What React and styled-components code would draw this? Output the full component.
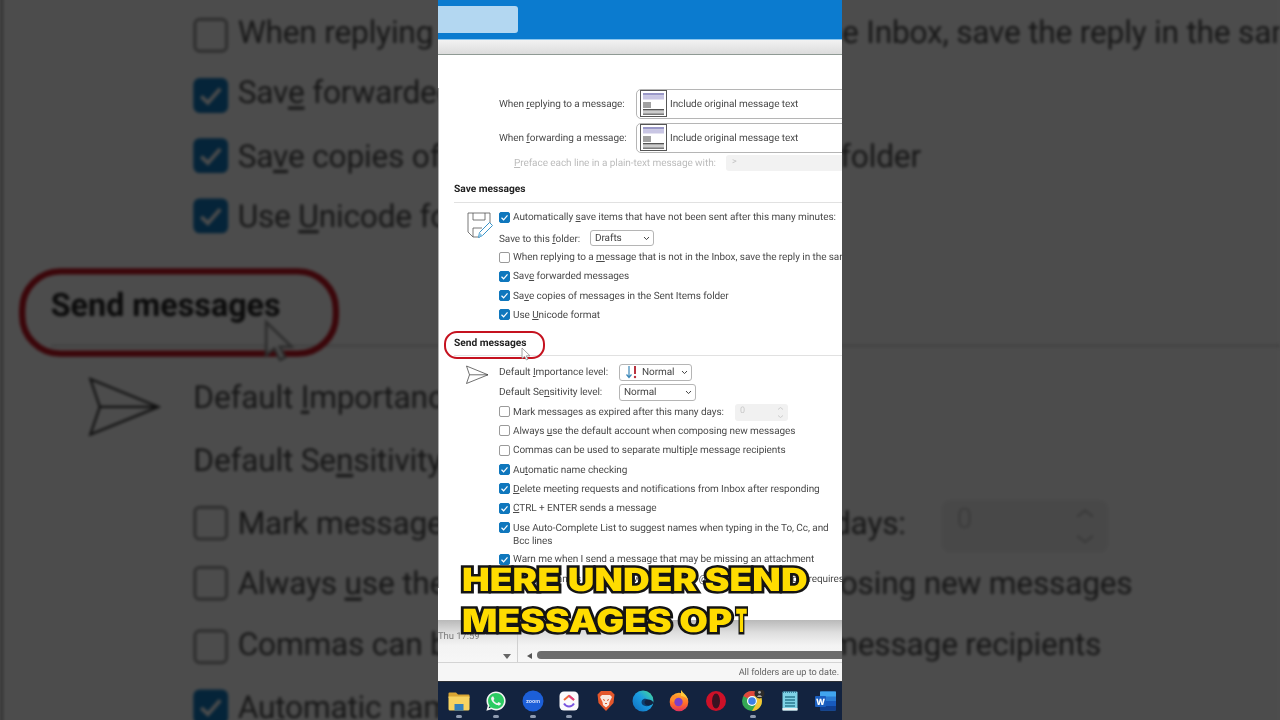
import React from "react";
import styled, { createGlobalStyle } from "styled-components";
import { FaWhatsapp } from "react-icons/fa";

const Global = createGlobalStyle`
  html, body { margin: 0; padding: 0; background: #4d4d4d; }
  body { width: 1280px; height: 720px; overflow: hidden; font-family: Roboto, "Open Sans", sans-serif; text-rendering: geometricPrecision; }
  u { text-underline-offset: 1px; text-decoration-thickness: 1px; }
`;

const Stage = styled.div`
  position: relative; width: 1280px; height: 720px; overflow: hidden;
  display: flex; justify-content: center;
`;
const Backdrop = styled.div`
  position: absolute; left: 438px; top: 0; width: 404px; height: 720px;
  transform: scale(3.168); transform-origin: 50% 50%;
  filter: blur(0.35px) brightness(0.3);
`;
const Front = styled.div`
  position: relative; width: 404px; height: 720px; overflow: hidden;
`;
const WindowFrame = styled.div`
  position: relative; width: 404px; height: 720px; display: flex; flex-direction: column;
  background: #fff; overflow: hidden; filter: blur(0.3px);
  font-size: 10px; letter-spacing: -0.07px; color: #4a4a4a;
`;
const Header = styled.header`
  flex: none; background: #0b7bcf; border-bottom: 1px solid #8cc6ee;
  display: flex; align-items: flex-start; padding-top: 6px; box-sizing: content-box; height: 33px;
`;
const SearchBox = styled.div`
  width: 80px; height: 27px; background: #b3d7f1; border-radius: 0 3px 3px 0;
`;
const Band = styled.div`
  flex: none; height: 14px; background: linear-gradient(#f2f2f2, #dcdcdc);
  border-bottom: 1px solid #8f9a94;
`;
const Body = styled.main`
  flex: none; height: 565px; overflow: hidden; background: #fff; padding-top: 33px; box-sizing: border-box;
`;
const Pane = styled.div`
  height: 500px; border-left: 1px solid #b0b0b0; padding-left: 15px;
`;
const ComboRow = styled.div`
  display: flex; align-items: center; height: 31px; margin-bottom: 3px; padding-left: 45px; white-space: nowrap;
`;
const ComboLabel = styled.label`
  width: 137px; flex: none; padding-top: 2px;
`;
const Combo = styled.div`
  flex: none; width: 230px; height: 30px; border: 1px solid #b5b5b5; border-radius: 5px; box-sizing: border-box;
  display: flex; align-items: center; gap: 3px; padding-left: 3px; margin-right: -50px;
`;
const ComboText = styled.span`
  padding-top: 2px;
`;
const PrefaceRow = styled.div`
  display: flex; align-items: center; height: 16px; margin-top: -1px; padding-left: 60px; color: #bcbcbc; white-space: nowrap;
`;
const PrefaceLabel = styled.label`
  width: 212px; flex: none; padding-top: 1px;
`;
const PrefaceInput = styled.div`
  flex: none; width: 140px; height: 16px; background: #f2f2f2; border-radius: 3px; padding-left: 6px; box-sizing: border-box;
  font-size: 9px; line-height: 15px; color: #c5c5c5;
`;
const SectionTitle = styled.h3`
  margin: ${p => p.$top}px -30px 0 0; height: 16px; padding-bottom: ${p => p.$pad}px; font-size: 10.2px; letter-spacing: 0; line-height: 19px; font-weight: 700;
  color: #222; border-bottom: 1px solid #e1e1e1; box-sizing: content-box;
`;
const Group = styled.section`
  display: flex; position: relative; padding-left: 45px; padding-top: ${p => p.$top}px; white-space: nowrap;
`;
const GroupIcon = styled.div`
  position: absolute; left: ${p => p.$x}px; top: ${p => p.$y}px;
`;
const Rows = styled.div`
  display: flex; flex-direction: column; width: 343px;
`;
const CheckRow = styled.div`
  display: flex; align-items: flex-start; gap: 3px; min-height: 19.3px; padding-top: 4.2px; box-sizing: border-box;
  line-height: 13.35px; margin-bottom: ${p => p.$after || 0}px; flex: none; ${p => p.$tall ? "height: 31.7px;" : ""}
`;
const Box = styled.span`
  flex: none; width: 11px; height: 11px; margin-top: .4px; box-sizing: border-box; border-radius: 2px;
  border: 1px solid ${p => p.$on ? "#0f77bd" : "#9a9a9a"}; background: ${p => p.$on ? "#0f77bd" : "#fff"};
  display: flex; align-items: center; justify-content: center;
`;
const FieldRow = styled.div`
  display: flex; align-items: center; flex: none; height: ${p => p.$h}px; margin-top: ${p => p.$top || 0}px;
`;
const FieldLabel = styled.label`
  flex: none; width: ${p => p.$w}px; padding-top: 1.6px;
`;
const Select = styled.div`
  flex: none; width: ${p => p.$w}px; height: ${p => p.$hh || 17}px; border: 1px solid #b5b5b5; border-radius: 3px; box-sizing: border-box;
  display: flex; align-items: center; padding: 0 3px 0 ${p => p.$pl || 4}px; gap: 3px; color: #444;
  span { flex: 1; padding-top: 1px; }
`;
const Spinner = styled.div`
  flex: none; width: 53px; height: 17px; margin-left: 8px; background: #f1f1f1; border-radius: 3px; box-sizing: border-box;
  display: flex; align-items: center; justify-content: space-between; padding: 0 4px 0 5px; color: #c9c9c9; font-size: 9px; margin-top: -2.2px;
`;
const Oval = styled.div`
  position: absolute; left: 6px; top: 331px; width: 101px; height: 28px; box-sizing: border-box;
  border: 2.5px solid #c5121f; border-radius: 13px;
`;
const Pointer = styled.svg`
  position: absolute; left: 83px; top: 347px;
`;
const Footer = styled.div`
  flex: none; height: 42px; display: flex; background: linear-gradient(#b9b9b9 0, #dedede 30%, #f3f3f3 60%, #f7f7f7 100%);
  border-bottom: 1px solid #d4d4d4;
`;
const FooterLeft = styled.div`
  flex: none; width: 80px; box-sizing: border-box; border-right: 1px solid #d0d0d0; display: flex; flex-direction: column;
  justify-content: space-between; font-size: 9.5px; color: #7c7c7c; padding-top: 11px; padding-bottom: 3px;
`;
const DropMark = styled.div`
  align-self: flex-end; margin-right: 6px; width: 0; height: 0;
  border-left: 4px solid transparent; border-right: 4px solid transparent; border-top: 5px solid #666;
`;
const ScrollArea = styled.div`
  flex: 1; display: flex; align-items: flex-end; padding-bottom: 3px; gap: 5px; padding-left: 9px;
`;
const ScrollArrow = styled.div`
  flex: none; width: 0; height: 0; margin-bottom: .5px;
  border-top: 3.5px solid transparent; border-bottom: 3.5px solid transparent; border-right: 5px solid #555;
`;
const ScrollThumb = styled.div`
  flex: 1; height: 8px; background: #6c6c6c; border-radius: 4px 0 0 4px;
`;
const Status = styled.div`
  flex: none; height: 18px; background: #f6f6f6; text-align: right; padding-right: 3px; font-size: 9.2px; line-height: 19px; color: #666;
`;
const Taskbar = styled.nav`
  flex: none; height: 39px; box-sizing: border-box; background: #13233f; border-top: 1px solid #2b2f36;
  display: grid; grid-template-columns: repeat(11, 36.7px); padding-left: 3px;
`;
const Slot = styled.div`
  position: relative; display: flex; justify-content: center; padding-top: 8px;
  &::after {
    content: ""; display: ${p => p.$open ? "block" : "none"}; position: absolute; left: 50%; bottom: 2px; width: 6px; height: 3px; margin-left: -3px;
    border-radius: 2px; background: #8f9bb0;
  }
`;
const WhatsappWrap = styled.span`
  display: flex; align-items: center; justify-content: center; width: 22px; height: 22px; color: #f4f4f4; font-size: 22px;
  background: radial-gradient(circle at 50% 50%, #2ccb62 0 8.5px, transparent 9px);
`;
const Caption = styled.div`
  position: absolute; left: 24px; top: 559px; z-index: 3; white-space: nowrap; transform: scaleX(1.155); transform-origin: 0 50%;
  font-family: Inter, "Liberation Sans", sans-serif; font-weight: 900; font-size: 32px; line-height: 41px; letter-spacing: 0.1px;
  color: #ffdc00; -webkit-text-stroke: 5px #141414; paint-order: stroke fill;
`;
const CaptionLine = styled.div`
  display: block; filter: blur(0.2px);
`;
const Reveal = styled.span`
  display: inline-block; transform: scaleX(0.45); transform-origin: 0 50%; margin-left: 3px;
`;

const Tick = () => (
  <svg width="9" height="9" viewBox="0 0 9 9"><path d="M1.5 4.8 3.6 6.8 7.5 2.4" fill="none" stroke="#fff" strokeWidth="1.2" /></svg>
);
const Caret = () => (
  <svg width="7" height="5" viewBox="0 0 7 5"><path d="M1 1 3.5 3.6 6 1" fill="none" stroke="#444" strokeWidth="1" /></svg>
);
const QuoteIcon = () => (
  <svg width="27" height="27" viewBox="0 0 27 27">
    <rect x=".5" y=".5" width="26" height="26" fill="#fff" stroke="#555" />
    <rect x="3" y="3" width="21" height="2.5" fill="#9a98c8" />
    <rect x="3" y="6" width="21" height="3.5" fill="#c9c6e4" />
    <rect x="3" y="12.5" width="8" height="1" fill="#444" />
    <rect x="3" y="14.5" width="8" height="1" fill="#444" />
    <rect x="3" y="16.5" width="8" height="1" fill="#444" />
    <rect x="3" y="19" width="21" height="1.5" fill="#555" />
    <rect x="3" y="21.5" width="21" height="1" fill="#999" />
    <rect x="3" y="23.5" width="21" height="1.2" fill="#444" />
  </svg>
);
const SaveIcon = () => (
  <svg width="28" height="28" viewBox="0 0 28 28" fill="none">
    <path d="M2 2H24V13M2 2V21L7 26H14" stroke="#555" strokeWidth=".8" />
    <path d="M7 2V9H19V2" stroke="#555" strokeWidth=".8" />
    <path d="M7 26V17H16" stroke="#555" strokeWidth=".8" />
    <path d="M12.5 26.5 13.5 21.5 23.5 11.5 26.5 14.5 16.5 24.5Z" fill="#fff" stroke="#3a94c8" strokeWidth="1" />
    <path d="M12.5 26.5 13.5 21.5 16.5 24.5Z" fill="#8cc4e4" />
  </svg>
);
const SendIcon = () => (
  <svg width="24" height="20" viewBox="0 0 24 20" fill="none" stroke="#333" strokeWidth=".7">
    <path d="M1.5 1 23 9.8 1.5 18.5 4.5 9.8Z" />
    <path d="M4.5 9.8H23" />
  </svg>
);
const ImportanceIcon = () => (
  <svg width="14" height="14" viewBox="0 0 14 14" fill="none">
    <path d="M4 1V12M1.5 9.5 4 12.5 6.5 9.5" stroke="#3a86b8" strokeWidth="1.2" />
    <path d="M10 1V9" stroke="#b8323f" strokeWidth="2" />
    <circle cx="10" cy="12" r="1.2" fill="#b8323f" />
  </svg>
);
const SpinArrows = () => (
  <svg width="7" height="13" viewBox="0 0 7 13" fill="none" stroke="#c4c4c4" strokeWidth=".8">
    <path d="M1 3.5 3.5 1.5 6 3.5M1 9.5 3.5 11.5 6 9.5" />
  </svg>
);
const CursorIcon = () => (
  <Pointer width="10" height="14" viewBox="0 0 10 14">
    <path d="M1 1V11.5L3.6 9.4 5.4 13 7 12.2 5.3 8.8H9Z" fill="#fff" stroke="#8d8d8d" strokeWidth=".8" />
  </Pointer>
);

const FolderIcon = () => (
  <svg width="22" height="22" viewBox="0 0 22 22">
    <path d="M0.5 3.5Q.5 2.5 1.5 2.5H8L10 4.5H20.5Q21.5 4.5 21.5 5.5V8H.5Z" fill="#d9a533" />
    <path d="M.5 6.5H21.5V19Q21.5 20.5 20 20.5H2Q.5 20.5 .5 19Z" fill="#f7d361" />
    <rect x="6.5" y="14" width="9" height="6.5" fill="#3480bd" />
  </svg>
);
const ZoomIcon = () => (
  <svg width="22" height="22" viewBox="0 0 22 22">
    <circle cx="11" cy="11" r="10.5" fill="#1c5fd8" />
    <text x="11" y="13" textAnchor="middle" fontSize="5.4" fontFamily="Inter, sans-serif" fontWeight="600" fill="#dfe9ff">zoom</text>
  </svg>
);
const ClickupIcon = () => (
  <svg width="22" height="22" viewBox="0 0 22 22" fill="none">
    <rect x="1.5" y="1.5" width="19" height="19" rx="4.5" fill="#fbfafc" />
    <path d="M6 10 11 5.8 16 10" stroke="#ef6a3c" strokeWidth="2" strokeLinejoin="round" />
    <path d="M6 13.5C8.5 17.5 13.5 17.5 16 13.5" stroke="#7a55e0" strokeWidth="2" />
    <path d="M11 5.8 16 10" stroke="#e2407e" strokeWidth="2" />
  </svg>
);
const BraveIcon = () => (
  <svg width="22" height="22" viewBox="0 0 22 22">
    <path d="M6 1H16L19.5 4.5 18.5 13 11 21 3.5 13 2.5 4.5Z" fill="#e4572c" />
    <path d="M7 5H15L17 7 14.5 12 14 15 11 17.5 8 15 7.5 12 5 7Z" fill="#f9e9df" />
    <path d="M8 9.5 10 10.5M14 9.5 12 10.5M10 13.5H12" stroke="#d9562c" strokeWidth="1" />
  </svg>
);
const EdgeIcon = () => (
  <svg width="22" height="22" viewBox="0 0 22 22">
    <defs>
      <linearGradient id="edgeFill" x1="0" y1="1" x2="1" y2="0">
        <stop offset="0" stopColor="#0f6cbd" />
        <stop offset=".55" stopColor="#1b9de2" />
        <stop offset="1" stopColor="#4be08f" />
      </linearGradient>
    </defs>
    <circle cx="11" cy="11" r="10.5" fill="url(#edgeFill)" />
    <path d="M21 13C18 17 12 17 10 14 8.5 11 11 8 14.5 9 16 9.5 17 11 16 13Z" fill="#0e3f6e" />
    <path d="M21.5 12.5C20 10 17 9 14 10 12 11 12 14 14.5 15 17 16 20 15 21.5 12.5Z" fill="#13233f" />
  </svg>
);
const FirefoxIcon = () => (
  <svg width="22" height="22" viewBox="0 0 22 22">
    <defs>
      <linearGradient id="foxFill" x1="0" y1="0" x2="0" y2="1">
        <stop offset="0" stopColor="#ffb02e" />
        <stop offset=".6" stopColor="#ff6a2b" />
        <stop offset="1" stopColor="#e0305f" />
      </linearGradient>
    </defs>
    <circle cx="11" cy="12" r="9.3" fill="url(#foxFill)" />
    <path d="M13 0C15 3 19 5 20 10 18 7 15 6 13 6Z" fill="#ffc93a" />
    <circle cx="10.5" cy="12" r="4.2" fill="#7d3fc8" />
    <path d="M2.5 8C5 4 8 5 10 7.5 8 8 6 9 6 12 4 12 3 10 2.5 8Z" fill="#ff8f2b" />
  </svg>
);
const OperaIcon = () => (
  <svg width="22" height="22" viewBox="0 0 22 22">
    <circle cx="11" cy="11" r="10" fill="#cd1128" />
    <ellipse cx="11" cy="11" rx="4" ry="7.6" fill="#3a1322" />
  </svg>
);
const ChromeIcon = () => (
  <svg width="24" height="22" viewBox="0 0 24 22">
    <circle cx="11" cy="11" r="10" fill="#34a853" />
    <path d="M11 1A10 10 0 0 1 19.66 6H11A5 5 0 0 0 6.67 8.5L2.34 6A10 10 0 0 1 11 1Z" fill="#e0483c" />
    <path d="M19.66 6A10 10 0 0 1 11 21L15.33 13.5A5 5 0 0 0 15.33 8.5 5 5 0 0 0 11 6Z" fill="#f6c533" />
    <circle cx="11" cy="11" r="5" fill="#fff" />
    <circle cx="11" cy="11" r="3.8" fill="#3d7fe6" />
    <circle cx="18.5" cy="3.5" r="5" fill="#2b2b2b" />
    <circle cx="18.5" cy="2.3" r="1.4" fill="#a9a9a9" />
    <path d="M16.2 7C16.2 4.8 20.8 4.8 20.8 7Z" fill="#a9a9a9" />
  </svg>
);
const NotepadIcon = () => (
  <svg width="22" height="22" viewBox="0 0 22 22">
    <rect x="3.5" y="1.5" width="15" height="19" rx="1" fill="#7fd2e6" />
    <rect x="3.5" y="18" width="15" height="2.5" fill="#e9eef0" />
    <path d="M4.5 1V3M6.5 1V3M8.5 1V3M10.5 1V3M12.5 1V3M14.5 1V3M16.5 1V3" stroke="#2a6d8a" strokeWidth=".8" />
    <path d="M6 7H16M6 10H16M6 13H16M6 16H16" stroke="#2b7a90" strokeWidth="1.3" />
  </svg>
);
const WordIcon = () => (
  <svg width="24" height="22" viewBox="0 0 24 22">
    <rect x="6" y="1.5" width="16" height="19" rx="1.5" fill="#2b7cd3" />
    <rect x="6" y="1.5" width="16" height="5" fill="#41a5ee" />
    <rect x="6" y="11" width="16" height="5" fill="#185abd" />
    <rect x="6" y="16" width="16" height="4.5" fill="#103f91" />
    <rect x="1" y="6" width="11" height="11" rx="1" fill="#1b5fc0" />
    <text x="6.5" y="14.5" textAnchor="middle" fontSize="8.5" fontFamily="Inter, sans-serif" fontWeight="800" fill="#fff">W</text>
  </svg>
);

const checks = [
  { on: false, node: <>When replying to a <u>m</u>essage that is not in the Inbox, save the reply in the same folder</> },
  { on: true, node: <>Sav<u>e</u> forwarded messages</> },
  { on: true, node: <>Sa<u>v</u>e copies of messages in the Sent Items folder</> },
  { on: true, node: <>Use <u>U</u>nicode format</> },
];
const sendChecks = [
  { on: false, node: <>Mark messa<u>g</u>es as expired after this many days:</>, spinner: true },
  { on: false, node: <>Always <u>u</u>se the default account when composing new messages</> },
  { on: false, node: <>Commas can be used to separate multip<u>l</u>e message recipients</> },
  { on: true, node: <>Au<u>t</u>omatic name checking</> },
  { on: true, node: <><u>D</u>elete meeting requests and notifications from Inbox after responding</> },
  { on: true, node: <><u>C</u>TRL + ENTER sends a message</> },
  { on: true, tall: true, node: <>Use Auto-Complete List to suggest names when typing in the To, Cc, and<br />Bcc lines</> },
  { on: true, node: <>Warn me when I send a message that may be missing an attachment</> },
  { on: true, node: <>Suggest names to mention when I use the @ symbol in a message (requires restarting Outlook)</> },
];
const apps = [
  { icon: <FolderIcon />, open: true },
  { icon: <WhatsappWrap><FaWhatsapp /></WhatsappWrap>, open: true },
  { icon: <ZoomIcon />, open: true },
  { icon: <ClickupIcon />, open: true },
  { icon: <BraveIcon /> },
  { icon: <EdgeIcon /> },
  { icon: <FirefoxIcon /> },
  { icon: <OperaIcon /> },
  { icon: <ChromeIcon />, open: true },
  { icon: <NotepadIcon /> },
  { icon: <WordIcon /> },
];

const OptionRow = ({ on, tall, children, extra }) => (
  <CheckRow $tall={tall}>
    <Box $on={on}>{on && <Tick />}</Box>
    <span>{children}</span>
    {extra}
  </CheckRow>
);

const OptionsWindow = () => (
  <WindowFrame>
    <Header><SearchBox /></Header>
    <Band />
    <Body>
      <Pane>
        <ComboRow>
          <ComboLabel>When <u>r</u>eplying to a message:</ComboLabel>
          <Combo><QuoteIcon /><ComboText>Include original message text</ComboText></Combo>
        </ComboRow>
        <ComboRow>
          <ComboLabel>When <u>f</u>orwarding a message:</ComboLabel>
          <Combo><QuoteIcon /><ComboText>Include original message text</ComboText></Combo>
        </ComboRow>
        <PrefaceRow>
          <PrefaceLabel><u>P</u>reface each line in a plain-text message with:</PrefaceLabel>
          <PrefaceInput>&gt;</PrefaceInput>
        </PrefaceRow>

        <SectionTitle $top={9} $pad={6}>Save messages</SectionTitle>
        <Group $top={4}>
          <GroupIcon $x={12} $y={8}><SaveIcon /></GroupIcon>
          <Rows>
            <CheckRow $after={3.35}>
              <Box $on><Tick /></Box>
              <span>Automatically <u>s</u>ave items that have not been sent after this many minutes:</span>
            </CheckRow>
            <FieldRow $h={17.35}>
              <FieldLabel $w={91}>Save to this <u>f</u>older:</FieldLabel>
              <Select $w={64} $hh={16}><span>Drafts</span><Caret /></Select>
            </FieldRow>
            {checks.map((c, i) => <OptionRow key={i} on={c.on}>{c.node}</OptionRow>)}
          </Rows>
        </Group>

        <SectionTitle $top={9.45} $pad={5}>Send messages</SectionTitle>
        <Group $top={7}>
          <GroupIcon $x={11} $y={9}><SendIcon /></GroupIcon>
          <Rows>
            <FieldRow $h={19}>
              <FieldLabel $w={120}>Default <u>I</u>mportance level:</FieldLabel>
              <Select $w={73} $pl={5}><ImportanceIcon /><span>Normal</span><Caret /></Select>
            </FieldRow>
            <FieldRow $h={19} $top={1}>
              <FieldLabel $w={120}>Default Se<u>n</u>sitivity level:</FieldLabel>
              <Select $w={77}><span>Normal</span><Caret /></Select>
            </FieldRow>
            {sendChecks.map((c, i) => (
              <OptionRow key={i} on={c.on} tall={c.tall} extra={c.spinner && <Spinner>0<SpinArrows /></Spinner>}>{c.node}</OptionRow>
            ))}
          </Rows>
        </Group>
      </Pane>
    </Body>
    <Footer>
      <FooterLeft>
        <span>Thu 17:59</span>
        <DropMark />
      </FooterLeft>
      <ScrollArea>
        <ScrollArrow />
        <ScrollThumb />
      </ScrollArea>
    </Footer>
    <Status>All folders are up to date.</Status>
    <Taskbar>
      {apps.map((a, i) => <Slot key={i} $open={a.open}>{a.icon}</Slot>)}
    </Taskbar>
    <Oval />
    <CursorIcon />
  </WindowFrame>
);

export default function App() {
  return (
    <>
      <Global />
      <Stage>
        <Backdrop><OptionsWindow /></Backdrop>
        <Front>
          <OptionsWindow />
          <Caption>
            <CaptionLine>HERE UNDER SEND</CaptionLine>
            <CaptionLine>MESSAGES OP<Reveal>T</Reveal></CaptionLine>
          </Caption>
        </Front>
      </Stage>
    </>
  );
}
